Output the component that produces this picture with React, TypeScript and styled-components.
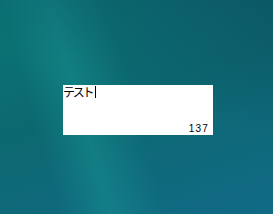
import React from "react";
import styled, { createGlobalStyle } from "styled-components";

const Global = createGlobalStyle`
  html, body { margin: 0; padding: 0; width: 100%; height: 100%; overflow: hidden; }
  #root { width: 100%; height: 100%; }
`;

const Desktop = styled.div`
  position: relative;
  box-sizing: border-box;
  width: 273px;
  height: 214px;
  padding: 85px 0 0 63px;
  background:
    linear-gradient(74deg, rgba(22,142,142,0) 18%, rgba(24,146,146,0.5) 33%, rgba(22,142,142,0) 50%),
    linear-gradient(160deg, #0a7674 0%, #0c6870 45%, #116a86 100%),
    #0b6a72;
`;

const Overlay = styled.div`
  position: absolute;
  inset: 0;
  pointer-events: none;
  background: linear-gradient(200deg, rgba(12,78,98,0.65) 0%, rgba(12,80,100,0) 45%);
`;

const Editor = styled.div`
  position: relative;
  box-sizing: border-box;
  width: 150px;
  height: 50px;
  background: #ffffff;
  display: flex;
  flex-direction: column;
  justify-content: space-between;
`;

const Line = styled.div`
  display: flex;
  align-items: center;
  height: 12px;
  margin-top: 1px;
  font-family: "Noto Sans CJK JP", "Noto Sans", sans-serif;
  font-size: 12px;
  line-height: 12px;
  color: #000;
  letter-spacing: -2.2px;
`;

const Caret = styled.span`
  display: inline-block;
  width: 1px;
  height: 12px;
  background: #000;
  margin-left: 3px;
`;

const Counter = styled.div`
  align-self: flex-end;
  margin: 0 4px 1px 0;
  font-family: "Liberation Sans", "DejaVu Sans", sans-serif;
  font-size: 10px;
  line-height: 10px;
  letter-spacing: 1.2px;
  color: #000;
`;

export default function App() {
  return (
    <>
      <Global />
      <Desktop>
        <Overlay />
        <Editor>
          <Line>
            テスト<Caret />
          </Line>
          <Counter>137</Counter>
        </Editor>
      </Desktop>
    </>
  );
}
